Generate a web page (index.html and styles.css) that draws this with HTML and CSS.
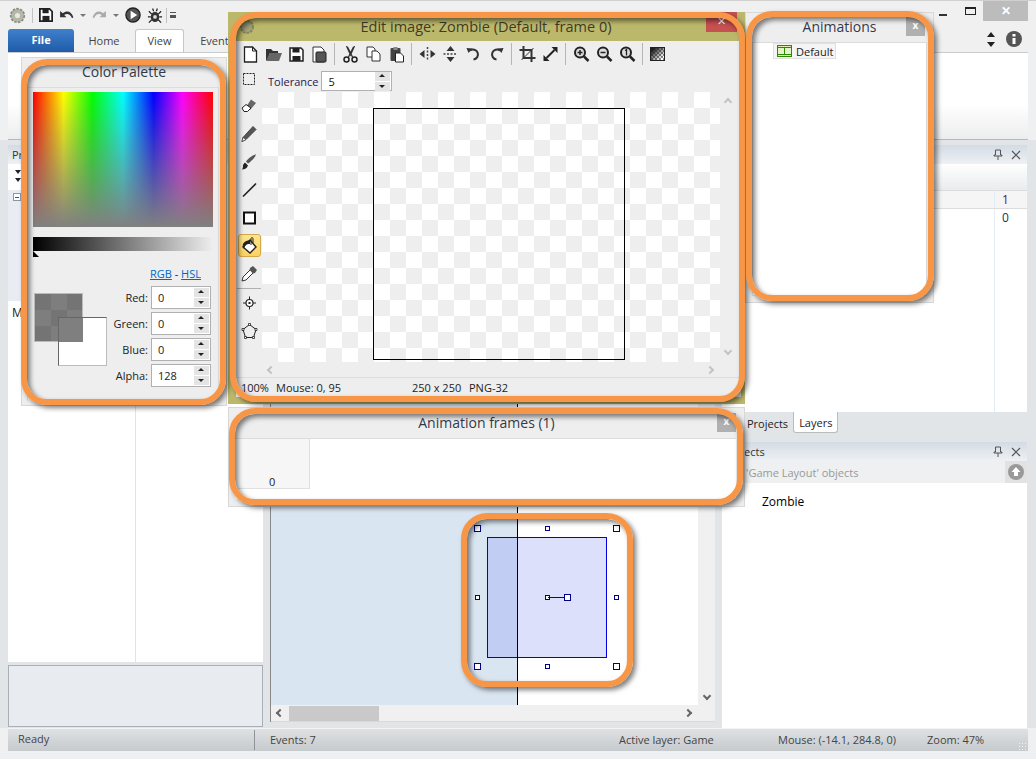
FILE: index.html
```html
<!DOCTYPE html>
<html lang="en">
<head>
    <meta charset="UTF-8">
    <title>Construct 2 - Edit image</title>
    <link rel="stylesheet" href="styles.css">
</head>
<body>
<div class="app">

    <!-- title bar -->
    <div class="titlebar">
        <div class="quick">
            <svg class="qicon" width="17" height="17" viewBox="0 0 20 20"><circle cx="10" cy="10" r="8" fill="#b5b8a8" stroke="#8a8c80" stroke-dasharray="3 1.5" stroke-width="2"/><circle cx="10" cy="10" r="3" fill="#e8e8e0"/></svg>
            <span class="qsep"></span>
            <svg class="qicon" width="14" height="14" viewBox="0 0 16 16"><path d="M1 1h11l3 3v11H1z" fill="#fff" stroke="#222" stroke-width="2"/><rect x="4" y="1" width="7" height="5" fill="#222"/><rect x="4" y="9" width="8" height="6" fill="#222"/></svg>
            <svg class="qicon" width="15" height="11" viewBox="0 0 16 12"><path d="M1 1v7h7L5.500 5.500C8 3.500 12 4 14 9l1.500-1C13.500 1 8 0 4 3.500z" fill="#333"/></svg>
            <span class="qdrop"></span>
            <svg class="qicon" width="15" height="11" viewBox="0 0 16 12"><path d="M15 1v7H8l2.500-2.500C8 3.500 4 4 2 9L.5 8C2.500 1 8 0 12 3.500z" fill="#aaa"/></svg>
            <span class="qdrop"></span>
            <svg class="qicon" width="16" height="16" viewBox="0 0 17 17"><circle cx="8.500" cy="8.500" r="7.500" fill="#555" stroke="#222" stroke-width="1.500"/><path d="M6 4l7 4.500L6 13z" fill="#fff"/></svg>
            <svg class="qicon" width="16" height="17" viewBox="0 0 17 17"><ellipse cx="8.500" cy="10" rx="4.500" ry="5.500" fill="#333"/><circle cx="8.500" cy="10" r="2" fill="#ddd"/><path d="M2 4l3 3M15 4l-3 3M1 10h3M16 10h-3M2 16l3-3M15 16l-3-3M6 1l1 3M11 1l-1 3" stroke="#222" stroke-width="1.300"/></svg>
            <span class="qsep qsep-tight"></span>
            <span class="qmore"></span>
        </div>
        <div class="winbtns">
            <span class="win-min"></span>
            <span class="win-max"></span>
            <span class="win-close">✕</span>
        </div>
    </div>

    <!-- ribbon tabs -->
    <div class="tabs">
        <span class="tab-file">File</span>
        <span class="tab">Home</span>
        <span class="tab tab-on">View</span>
        <span class="tab tab-wide">Events</span>
        <span class="tabs-right">
            <svg width="10" height="15" viewBox="0 0 10 15"><path d="M5 0l4 5H1zM5 15l4-5H1z" fill="#222"/></svg>
            <svg width="16" height="16" viewBox="0 0 16 16"><circle cx="8" cy="8" r="8" fill="#555"/><rect x="6.500" y="7" width="3" height="6" fill="#fff"/><rect x="6.500" y="3" width="3" height="2.500" fill="#fff"/></svg>
        </span>
    </div>
    <div class="ribbon"></div>

    <!-- main docked panels -->
    <div class="main">
        <div class="left">
            <div class="pane pane-left">
                <div class="pane-head">Properties</div>
                <div class="left-body">
                    <div class="left-col">
                        <div class="left-tools"><span class="mini-arrow"></span><span class="mini-arrow"></span></div>
                        <div class="left-tree"><span class="mini-box"></span></div>
                        <div class="left-m">Misc</div>
                    </div>
                    <div class="left-col2"></div>
                </div>
            </div>
            <div class="help-box"></div>
        </div>

        <div class="center">
            <div class="layout-view">
                <div class="canvas-row">
                    <div class="canvas">
                        <div class="outside"></div>
                        <div class="sprite"><div class="sprite-shade"></div></div>
                        <div class="guide"></div>
                        <div class="handle hl1"></div>
                        <div class="handle hl2"></div>
                        <div class="handle hl3"></div>
                        <div class="handle hl4"></div>
                        <div class="handle small hl5"></div>
                        <div class="handle small hl6"></div>
                        <div class="handle small hl7"></div>
                        <div class="handle small hl8"></div>
                        <div class="handle small hl9"></div>
                        <div class="angle-line"></div>
                        <div class="handle hl10"></div>
                    </div>
                    <div class="vscroll"><span class="chev-down"></span></div>
                </div>
                <div class="hscroll">
                    <span class="chev-left"></span>
                    <span class="hthumb"></span>
                    <span class="chev-right"></span>
                </div>
            </div>
        </div>

        <div class="right">
            <div class="pane pane-props">
                <div class="pane-head"><span>Layers</span><span class="pane-btns">
                    <svg width="10" height="11" viewBox="0 0 10 11"><path d="M2.500 1h5v5h1.500v1H1V6h1.500zM5 7v4" fill="none" stroke="#555"/></svg>
                    <svg width="10" height="10" viewBox="0 0 10 10"><path d="M1 1l8 8M9 1l-8 8" stroke="#555" stroke-width="1.200"/></svg>
                </span></div>
                <div class="props-tools"></div>
                <div class="prop-row prop-sel"><span class="prop-val val-1">1</span></div>
                <div class="prop-row"><span class="prop-val val-0">0</span></div>
                <div class="prop-fill"><span class="prop-line"></span></div>
            </div>
            <div class="right-tabs">
                <span class="rtab">Projects</span>
                <span class="rtab rtab-on">Layers</span>
            </div>
            <div class="pane pane-objects">
                <div class="pane-head"><span>Objects</span><span class="pane-btns">
                    <svg width="10" height="11" viewBox="0 0 10 11"><path d="M2.500 1h5v5h1.500v1H1V6h1.500zM5 7v4" fill="none" stroke="#555"/></svg>
                    <svg width="10" height="10" viewBox="0 0 10 10"><path d="M1 1l8 8M9 1l-8 8" stroke="#555" stroke-width="1.200"/></svg>
                </span></div>
                <div class="obj-tools">
                    <span>'Game Layout' objects</span>
                    <span class="obj-up"><svg width="16" height="16" viewBox="0 0 16 16"><circle cx="8" cy="8" r="8" fill="#999"/><path d="M8 3l4.500 5H10v4H6V8H3.500z" fill="#fff"/></svg></span>
                </div>
                <div class="obj-item">Zombie</div>
            </div>
        </div>
    </div>

    <!-- status bar -->
    <div class="status">
        <span class="st st-ready">Ready</span>
        <span class="st st-events">Events: 7</span>
        <span class="st st-layer">Active layer: Game</span>
        <span class="st st-mouse">Mouse: (-14.1, 284.8, 0)</span>
        <span class="st st-zoom">Zoom: 47%</span>
    </div>

    <!-- floating: color palette -->
    <div class="float palette">
        <div class="float-title">Color Palette</div>
        <div class="palette-body">
            <div class="spectrum"><div class="spectrum-fade"></div></div>
            <div class="lum"></div>
            <div class="lum-mark"></div>
            <div class="links"><a href="#">RGB</a> - <a href="#">HSL</a></div>
            <div class="color-row">
                <div class="swatches">
                    <div class="swatch-back"></div>
                    <div class="swatch-front"></div>
                </div>
                <div class="fields">
                    <label class="field"><span>Red:</span><span class="spin"><b>0</b><i class="arrows"><u class="up"></u><u class="dn"></u></i></span></label>
                    <label class="field"><span>Green:</span><span class="spin"><b>0</b><i class="arrows"><u class="up"></u><u class="dn"></u></i></span></label>
                    <label class="field"><span>Blue:</span><span class="spin"><b>0</b><i class="arrows"><u class="up"></u><u class="dn"></u></i></span></label>
                    <label class="field"><span>Alpha:</span><span class="spin"><b>128</b><i class="arrows"><u class="up"></u><u class="dn"></u></i></span></label>
                </div>
            </div>
        </div>
    </div>

    <!-- floating: image editor -->
    <div class="float editor">
        <div class="editor-title">
            <svg class="editor-gear" width="16" height="16" viewBox="0 0 16 16"><circle cx="8" cy="8" r="6" fill="#a3a27a" stroke="#85845f" stroke-width="2" stroke-dasharray="2.500 1"/></svg>
            <span>Edit image: Zombie (Default, frame 0)</span>
            <span class="editor-close">✕</span>
        </div>
        <div class="editor-client">
            <div class="toolbar">
                <svg width="16" height="17" viewBox="0 0 16 17"><path d="M2 1h8l4 4v11H2z" fill="#fff" stroke="#222" stroke-width="1.300"/><path d="M10 1v4h4" fill="none" stroke="#222"/></svg>
                <svg width="17" height="15" viewBox="0 0 17 15"><path d="M1 2h5l2 2h5v2H5L2 13H1z" fill="#333"/><path d="M5 6h12l-3 8H1z" fill="#666"/></svg>
                <svg width="15" height="15" viewBox="0 0 15 15"><path d="M1 1h11l2 2v11H1z" fill="#fff" stroke="#222" stroke-width="1.500"/><rect x="3.500" y="1" width="7" height="4.500" fill="#222"/><rect x="3.500" y="9" width="8" height="5" fill="#222"/></svg>
                <svg width="15" height="17" viewBox="0 0 15 17"><path d="M1 1h8l3 3v12H1z" fill="#fff" stroke="#333"/><rect x="4" y="6" width="10" height="10" rx="1" fill="#555" stroke="#222"/></svg>
                <span class="tsep"></span>
                <svg width="16" height="17" viewBox="0 0 16 17"><path d="M4 0l4 9 4-9M5 1l5 10M11 1L6 11" fill="none" stroke="#333" stroke-width="1.300"/><circle cx="4" cy="13.500" r="2.500" fill="none" stroke="#222" stroke-width="1.500"/><circle cx="12" cy="13.500" r="2.500" fill="none" stroke="#222" stroke-width="1.500"/></svg>
                <svg width="15" height="16" viewBox="0 0 15 16"><path d="M1 1h6l2 2v8H1z" fill="#fff" stroke="#333"/><path d="M6 5h5l3 3v7H6z" fill="#fff" stroke="#333"/></svg>
                <svg width="14" height="17" viewBox="0 0 14 17"><rect x="1" y="2" width="10" height="13" rx="1" fill="#444"/><rect x="4" y="1" width="4" height="3" fill="#888"/><path d="M6 7h5l3 3v6H6z" fill="#fff" stroke="#222"/></svg>
                <span class="tsep"></span>
                <svg width="16" height="14" viewBox="0 0 16 14"><path d="M0 7l5-4v8zM16 7l-5-4v8z" fill="#333"/><path d="M8 0v14" stroke="#444" stroke-dasharray="2 1.500" stroke-width="1.500"/></svg>
                <svg width="14" height="16" viewBox="0 0 14 16"><path d="M7 0l4 5H3zM7 16l4-5H3z" fill="#333"/><path d="M0 8h14" stroke="#444" stroke-dasharray="2 1.500" stroke-width="1.500"/></svg>
                <svg width="14" height="14" viewBox="0 0 14 14"><path d="M3.500 3.500A5 5 0 1 1 7 12.500" fill="none" stroke="#333" stroke-width="2"/><path d="M0 1l6 .5L2 6z" fill="#333"/></svg>
                <svg width="14" height="14" viewBox="0 0 14 14"><path d="M10.500 3.500A5 5 0 1 0 7 12.500" fill="none" stroke="#333" stroke-width="2"/><path d="M14 1l-6 .5L12 6z" fill="#333"/></svg>
                <span class="tsep"></span>
                <svg width="16" height="16" viewBox="0 0 16 16"><path d="M4 0v12h12M0 4h12v12" fill="none" stroke="#333" stroke-width="2"/><path d="M2 14L14 2" stroke="#333"/></svg>
                <svg width="14" height="14" viewBox="0 0 14 14"><path d="M3 11l8-8" stroke="#222" stroke-width="2"/><path d="M8 0h6v6zM0 8v6h6z" fill="#222"/></svg>
                <span class="tsep"></span>
                <svg width="16" height="16" viewBox="0 0 16 16"><circle cx="6.500" cy="6.500" r="5" fill="#ddd" stroke="#222" stroke-width="2"/><path d="M10.500 10.500L15 15" stroke="#222" stroke-width="2.500"/><path d="M4 6.500h5M6.500 4v5" stroke="#222" stroke-width="1.500"/></svg>
                <svg width="16" height="16" viewBox="0 0 16 16"><circle cx="6.500" cy="6.500" r="5" fill="#ddd" stroke="#222" stroke-width="2"/><path d="M10.500 10.500L15 15" stroke="#222" stroke-width="2.500"/><path d="M4 6.500h5" stroke="#222" stroke-width="1.500"/></svg>
                <svg width="16" height="16" viewBox="0 0 16 16"><circle cx="6.500" cy="6.500" r="5" fill="#ddd" stroke="#222" stroke-width="2"/><path d="M10.500 10.500L15 15" stroke="#222" stroke-width="2.500"/><path d="M5.500 4.500l1.500-.8V9.500" fill="none" stroke="#222" stroke-width="1.300"/></svg>
                <span class="tsep"></span>
                <span class="alpha-icon"></span>
            </div>
            <div class="editor-main">
                <div class="tools">
                    <svg class="tool-first" width="12" height="12" viewBox="0 0 12 12"><rect x=".5" y=".5" width="11" height="11" fill="none" stroke="#222" stroke-dasharray="2 1"/></svg>
                    <svg width="16" height="15" viewBox="0 0 16 15"><path d="M10 1l5 3.500-6 7-4-3z" fill="#666"/><path d="M1 9.500L5 6l5 3.500-3.500 3.500H3z" fill="#fff" stroke="#222"/></svg>
                    <svg width="16" height="17" viewBox="0 0 16 17"><path d="M12 1l3 3L5 14l-4 2 1-4z" fill="#555" stroke="#444"/><path d="M2 12l3 2-4 2z" fill="#fff" stroke="#333" stroke-width=".6"/></svg>
                    <svg width="16" height="17" viewBox="0 0 16 17"><path d="M15 1c-1 3-5 7-8 9l-2-2c2-3 7-7 10-7z" fill="#555"/><path d="M4 9l3 3c-1 3-4 4-6 4 1-1 1-3 1-4s1-2 2-3z" fill="#222"/></svg>
                    <svg width="15" height="15" viewBox="0 0 15 15"><path d="M1 14L14 1" stroke="#222" stroke-width="1.600"/></svg>
                    <svg width="13" height="13" viewBox="0 0 13 13"><rect x="1" y="1" width="11" height="11" fill="#fff" stroke="#111" stroke-width="2"/></svg>
                    <span class="tool-on"><svg width="17" height="17" viewBox="0 0 17 17"><path d="M9 3l6 7-6 6-7-6z" fill="#fff" stroke="#222" stroke-width="1.400"/><path d="M2 10C1 7 3 4 9 3v4c-4 0-5 1-6 5z" fill="#222"/><path d="M10 8V2c0-2 2-2 2 0v4" fill="none" stroke="#222"/></svg></span>
                    <svg width="16" height="16" viewBox="0 0 16 16"><path d="M10 3l3 3-8 8-4 1 1-4z" fill="#fff" stroke="#333"/><path d="M9 2l3-2 4 4-2 3-2 .5L8.500 4z" fill="#555"/></svg>
                    <span class="tool-sep"></span>
                    <svg width="13" height="13" viewBox="0 0 13 13"><circle cx="6.500" cy="6.500" r="3.500" fill="#fff" stroke="#222" stroke-width="1.200"/><rect x="5.500" y="5.500" width="2" height="2" fill="#222"/><path d="M6.500 0v3M6.500 10v3M0 6.500h3M10 6.500h3" stroke="#222"/></svg>
                    <svg width="17" height="17" viewBox="0 0 17 17"><path d="M8.500 2l6.500 5-2.500 8h-8L2 7z" fill="none" stroke="#222"/><path d="M7.500 1h2v2h-2zM14 6h2v2h-2zM1 6h2v2H1zM3.500 14h2v2h-2zM11.500 14h2v2h-2z" fill="#fff" stroke="#222" stroke-width=".8"/></svg>
                </div>
                <div class="editor-work">
                    <div class="tolerance">
                        <span>Tolerance</span>
                        <span class="spin spin-tol"><b>5</b><i class="arrows"><u class="up"></u><u class="dn"></u></i></span>
                    </div>
                    <div class="board-row">
                        <div class="board"><div class="image-box"></div></div>
                        <div class="board-vs"><span class="soft-up"></span><span class="soft-down"></span></div>
                    </div>
                    <div class="board-hs"><span class="soft-left"></span><span class="soft-right"></span></div>
                </div>
            </div>
            <div class="editor-status">
                <span class="es-zoom">100%</span>
                <span class="es-mouse">Mouse: 0, 95</span>
                <span class="es-size">250 x 250</span>
                <span class="es-fmt">PNG-32</span>
            </div>
        </div>
    </div>

    <!-- floating: animations -->
    <div class="float anims">
        <div class="float-title">Animations<span class="float-x">x</span></div>
        <div class="anims-body">
            <div class="anim-item">
                <svg width="15" height="12" viewBox="0 0 15 12"><rect x=".5" y=".5" width="14" height="11" fill="#e3f3c8" stroke="#2d8a00"/><path d="M.5 2.500h14M.5 9.500h14M7.500 2.500v7" stroke="#2d8a00"/><path d="M1 1.500h13M1 10.500h13" stroke="#d6e9a8" stroke-dasharray="1 1"/></svg>
                <span>Default</span>
            </div>
        </div>
    </div>

    <!-- floating: frames -->
    <div class="float frames">
        <div class="float-title">Animation frames (1)<span class="float-x">x</span></div>
        <div class="frames-body">
            <div class="frame-thumb">0</div>
        </div>
    </div>

    <!-- orange callouts -->
    <div class="callout co-palette"></div>
    <div class="callout co-editor"></div>
    <div class="callout co-anims"></div>
    <div class="callout co-frames"></div>
    <div class="callout co-sprite"></div>
</div>
</body>
</html>
```

FILE: styles.css
```css
* {
    box-sizing: border-box;
}
html, body {
    margin: 0;
    padding: 0;
}
body {
    font-family: "Open Sans", "Noto Sans", sans-serif;
    font-size: 11px;
    color: #222;
    background: #e6e8ea;
}
.app {
    position: relative;
    width: 1036px;
    height: 759px;
    overflow: hidden;
    background: #eef0f1;
    display: flex;
    flex-direction: column;
}

/* title bar */
.titlebar {
    height: 28px;
    flex: none;
    display: flex;
    justify-content: space-between;
    background: #f0f0f0;
    border-top: 1px solid #d0d0d0;
}
.quick {
    display: flex;
    align-items: center;
    gap: 6px;
    padding: 1px 0 0 9px;
}
.qsep {
    width: 1px;
    height: 15px;
    background: #c2c2c2;
}
.qsep-tight,
.qmore {
    margin-left: -3px;
}
.qicon {
    display: block;
}
.qdrop {
    width: 0;
    height: 0;
    border: 3px solid transparent;
    border-top: 3px solid #777;
    margin-top: 3px;
}
.qmore {
    width: 6px;
    height: 6px;
    border-top: 1px solid #555;
    border-bottom: 3px solid #555;
}
.winbtns {
    display: flex;
    align-items: flex-start;
}
.win-min {
    width: 8px;
    height: 2px;
    background: #333;
    margin: 13px 18px 0 0;
}
.win-max {
    width: 11px;
    height: 8px;
    border: 1px solid #222;
    border-top-width: 2px;
    margin: 6px 7px 0 0;
}
.win-close {
    width: 45px;
    height: 20px;
    margin-right: 8px;
    background: #bcbcbc;
    color: #fff;
    font-size: 12px;
    font-weight: 700;
    text-align: center;
    line-height: 20px;
}

/* ribbon */
.tabs {
    height: 24px;
    flex: none;
    padding: 0 8px;
    display: flex;
    align-items: flex-end;
    background: #f0f0f0;
    font-size: 11px;
}
.tab-file {
    width: 66px;
    height: 23px;
    background: linear-gradient(#3f80cc, #1f5ba8);
    border-radius: 3px 3px 0 0;
    color: #fff;
    font-weight: 700;
    text-align: center;
    line-height: 21px;
}
.tab {
    width: 60px;
    height: 22px;
    text-align: center;
    line-height: 21px;
    color: #444;
}
.tab-on {
    width: 49px;
    height: 23px;
    margin-left: 1px;
    background: #fff;
    border: 1px solid #c4c6c8;
    border-bottom: 0;
    border-radius: 3px 3px 0 0;
}
.tab-wide {
    width: 66px;
}
.tabs-right {
    margin-left: auto;
    display: flex;
    align-items: center;
    gap: 10px;
    padding: 0 6px 5px 0;
}
.ribbon {
    height: 88px;
    flex: none;
    margin: 0 8px;
    background: linear-gradient(#fff 60%, #eceded);
    border-top: 1px solid #c9cbcd;
    border-bottom: 1px solid #b5b9bd;
}

/* docked panels */
.main {
    height: 588px;
    flex: none;
    padding: 5px 8px 0;
    display: flex;
    gap: 7px;
    background: #e2e5e8;
}
.left {
    width: 255px;
    flex: none;
    display: flex;
    flex-direction: column;
    gap: 3px;
    padding-bottom: 1px;
}
.pane-head {
    height: 19px;
    flex: none;
    display: flex;
    justify-content: space-between;
    align-items: center;
    padding: 0 6px 0 4px;
    background: linear-gradient(#d3dbe4, #eef1f4);
    color: #333;
}
.pane-btns {
    display: flex;
    align-items: center;
    gap: 8px;
}
.pane-left {
    flex: 1;
    display: flex;
    flex-direction: column;
    background: #fff;
}
.left-body {
    flex: 1;
    display: flex;
}
.left-col {
    width: 128px;
    border-right: 1px solid #e3e3e3;
}
.left-tools {
    height: 26px;
    padding: 6px 0 0 7px;
}
.mini-arrow {
    display: block;
    width: 0;
    height: 0;
    margin-bottom: 4px;
    border: 3px solid transparent;
    border-top: 4px solid #222;
    border-bottom: 0;
}
.left-tree {
    height: 111px;
    padding: 3px 0 0 5px;
    background: #e9edf3;
}
.mini-box {
    display: block;
    width: 8px;
    height: 8px;
    background: linear-gradient(#456, #456) center / 4px 1px no-repeat, #fff;
    border: 1px solid #8a97a8;
}
.left-m {
    padding: 3px 0 0 4px;
    font-size: 12px;
}
.help-box {
    height: 62px;
    flex: none;
    background: #e8ebf0;
    border: 1px solid #a9b0b8;
}
.center {
    width: 445px;
    flex: none;
    padding-bottom: 6px;
}
.layout-view {
    height: 100%;
    display: flex;
    flex-direction: column;
    border-left: 1px solid #888;
    background: #f0f0f0;
}
.canvas-row {
    flex: 1;
    display: flex;
}
.canvas {
    position: relative;
    flex: 1;
    background: #fff;
}
.outside {
    position: absolute;
    left: 0;
    top: 0;
    bottom: 0;
    width: 246px;
    background: #d9e5f1;
}
.guide {
    position: absolute;
    left: 246px;
    top: 0;
    bottom: 0;
    width: 1px;
    background: #000;
}
.sprite {
    position: absolute;
    left: 216px;
    top: 392px;
    width: 120px;
    height: 121px;
    background: #dde0fb;
    border: 1px solid #0000e0;
}
.sprite-shade {
    width: 29px;
    height: 100%;
    background: #c2cdf3;
}
.handle {
    position: absolute;
    width: 7px;
    height: 7px;
    background: #fff;
    border: 1px solid #00008b;
}
.handle.small {
    width: 5px;
    height: 5px;
}
.hl1 { left: 203px; top: 380px; }
.hl2 { left: 342px; top: 380px; }
.hl3 { left: 203px; top: 518px; }
.hl4 { left: 342px; top: 518px; }
.hl5 { left: 274px; top: 381px; }
.hl6 { left: 204px; top: 450px; }
.hl7 { left: 343px; top: 450px; }
.hl8 { left: 274px; top: 519px; }
.hl9 { left: 274px; top: 450px; }
.hl10 { left: 293px; top: 449px; }
.angle-line {
    position: absolute;
    left: 277px;
    top: 452px;
    width: 17px;
    height: 1px;
    background: #0000c8;
}
.vscroll {
    width: 17px;
    display: flex;
    align-items: flex-end;
    justify-content: center;
    padding-bottom: 6px;
    background: #f0f0f0;
}
.chev-down, .chev-left, .chev-right {
    width: 6px;
    height: 6px;
    border: solid #666;
    border-width: 0 2px 2px 0;
    display: block;
}
.chev-down {
    transform: rotate(45deg);
}
.chev-left {
    transform: rotate(135deg);
    margin-left: 6px;
}
.chev-right {
    transform: rotate(-45deg);
    margin-left: auto;
    margin-right: 24px;
}
.hscroll {
    height: 17px;
    flex: none;
    display: flex;
    align-items: center;
    border-bottom: 1px solid #d9d9d9;
}
.hthumb {
    width: 90px;
    height: 15px;
    margin-left: 6px;
    background: #c9c9c9;
}
.right {
    width: 305px;
    flex: none;
    display: flex;
    flex-direction: column;
}
.pane-props {
    height: 267px;
    flex: none;
    display: flex;
    flex-direction: column;
    background: #fff;
}
.props-tools {
    height: 26px;
    flex: none;
    background: linear-gradient(#fff, #e9ebed);
}
.prop-row {
    height: 19px;
    flex: none;
    display: flex;
    justify-content: flex-end;
    padding-right: 3px;
    background: #fff;
}
.prop-sel {
    background: #f5f5f5;
    border-top: 1px solid #dcdcdc;
    border-bottom: 1px solid #dcdcdc;
}
.prop-val {
    width: 30px;
    font-size: 12px;
    padding-left: 7px;
    border-left: 1px solid #e4ecf5;
}
.val-1 {
    color: #5e1050;
}
.val-0 {
    color: #1a2f5f;
}
.prop-fill {
    flex: 1;
    display: flex;
    justify-content: flex-end;
    padding-right: 3px;
}
.prop-line {
    width: 30px;
    border-left: 1px solid #e4ecf5;
}
.right-tabs {
    height: 24px;
    flex: none;
    display: flex;
    align-items: flex-start;
    padding-left: 20px;
}
.rtab {
    height: 21px;
    padding: 0 5px;
    line-height: 23px;
}
.rtab-on {
    background: #fff;
    border: 1px solid #b9bcbf;
    border-top: 0;
    border-radius: 0 0 3px 3px;
    line-height: 22px;
}
.pane-objects {
    flex: 1;
    display: flex;
    flex-direction: column;
    background: #fff;
    margin-top: 6px;
}
.obj-tools {
    height: 22px;
    flex: none;
    display: flex;
    justify-content: space-between;
    align-items: center;
    padding-left: 24px;
    background: #eef0f1;
    color: #999;
}
.obj-up {
    width: 22px;
    height: 22px;
    display: flex;
    align-items: center;
    justify-content: center;
    background: #e2e2e2;
}
.obj-item {
    padding: 10px 0 0 40px;
    font-size: 12px;
    color: #000;
}

/* status bar */
.status {
    position: relative;
    height: 23px;
    flex: none;
    margin: 0 8px;
    background: linear-gradient(#dfe1e3, #c6cacd);
    border-top: 1px solid #f2f3f4;
    color: #444;
    display: flex;
    align-items: center;
}
.status::after {
    content: "";
    position: absolute;
    right: 0;
    bottom: 0;
    width: 10px;
    height: 9px;
    background: radial-gradient(circle, #f4f4f4 1px, transparent 1px) 0 0 / 3px 3px;
}
.st {
    flex: none;
}
.st-ready { width: 247px; padding-left: 10px; border-right: 1px solid #8f9396; height: 20px; line-height: 18px; }
.st-events { width: 364px; padding-left: 15px; padding-bottom: 1px; }
.st-layer { width: 159px; padding-bottom: 1px; }
.st-mouse { width: 149px; padding-bottom: 1px; }
.st-zoom { padding-bottom: 1px; }

/* floating windows */
.float {
    position: absolute;
    background: #eee;
}
.float-title {
    position: relative;
    height: 29px;
    flex: none;
    font-size: 14px;
    color: #333a4a;
    text-align: center;
    line-height: 28px;
}
.float-x {
    position: absolute;
    right: 8px;
    top: 4px;
    width: 19px;
    height: 19px;
    background: #b0b0b0;
    color: #fff;
    font-size: 10px;
    font-weight: 700;
    line-height: 16px;
}

/* palette */
.palette {
    left: 21px;
    top: 57px;
    width: 206px;
    height: 349px;
    border: 1px solid #d8d8d8;
    display: flex;
    flex-direction: column;
}
.palette-body {
    flex: 1;
    margin: 0 7px 4px 5px;
    padding: 4px 5px 0;
    border: 1px solid #dcdcdc;
    border-bottom-width: 0;
}
.spectrum {
    position: relative;
    height: 135px;
    background: linear-gradient(to right, #f00, #ff0 17%, #0f0 33%, #0ff 50%, #00f 67%, #f0f 83%, #f00);
}
.spectrum-fade {
    height: 100%;
    background: linear-gradient(rgba(128, 128, 128, 0), #808080);
}
.lum {
    height: 14px;
    margin-top: 10px;
    background: linear-gradient(to right, #000, #eee);
}
.lum-mark {
    width: 0;
    height: 0;
    border-left: 6px solid #000;
    border-top: 6px solid transparent;
}
.links {
    margin-top: 9px;
    padding-right: 12px;
    text-align: right;
}
.links a {
    color: #0066cc;
}
.color-row {
    display: flex;
    justify-content: space-between;
    margin-top: 5px;
}
.swatches {
    position: relative;
    width: 74px;
    height: 74px;
    margin: 7px 0 0 1px;
}
.swatch-back {
    width: 49px;
    height: 49px;
    border: 1px solid #bbb;
    background: conic-gradient(#7e7e7e 25%, #747474 0 50%, #7e7e7e 0 75%, #747474 0) 0 0 / 32px 32px;
}
.swatch-front {
    position: absolute;
    left: 24px;
    top: 24px;
    width: 49px;
    height: 49px;
    border: 1px solid #bbb;
    border-top-color: #666;
    border-left-color: #666;
    background: linear-gradient(#7f7f7f, #7f7f7f) 0 0 / 24px 24px no-repeat, #fff;
}
.fields {
    display: flex;
    flex-direction: column;
    gap: 3px;
    margin-right: 2px;
}
.field {
    display: flex;
    align-items: center;
    justify-content: flex-end;
    gap: 3px;
}
.spin {
    width: 60px;
    height: 23px;
    display: flex;
    justify-content: space-between;
    align-items: center;
    padding: 0 1px 0 6px;
    background: #fff;
    border: 1px solid #b0b0b0;
}
.spin b {
    font-weight: 400;
}
.arrows {
    width: 15px;
    display: flex;
    flex-direction: column;
    gap: 1px;
}
.arrows u {
    height: 9px;
    background: #e4e4e4;
    position: relative;
    display: block;
}
.arrows u::after {
    content: "";
    position: absolute;
    left: 4px;
    border: 3px solid transparent;
}
.arrows .up::after {
    top: -1px;
    border-bottom: 3px solid #222;
}
.arrows .dn::after {
    top: 3px;
    border-top: 3px solid #222;
}

/* editor */
.editor {
    left: 228px;
    top: 12px;
    width: 517px;
    height: 392px;
    background: #bcb86b;
    padding: 0 4px 7px 8px;
    display: flex;
    flex-direction: column;
}
.editor-title {
    height: 29px;
    flex: none;
    position: relative;
    font-size: 14.5px;
    line-height: 29px;
    text-align: center;
    color: #3c3c28;
    padding-right: 5px;
}
.editor-gear {
    position: absolute;
    left: 3px;
    top: 7px;
}
.editor-close {
    position: absolute;
    right: 4px;
    top: 0;
    width: 31px;
    height: 20px;
    background: #c75050;
    color: #fff;
    font-size: 11px;
    line-height: 18px;
}
.editor-client {
    flex: 1;
    background: #eee;
    display: flex;
    flex-direction: column;
}
.toolbar {
    height: 26px;
    flex: none;
    display: flex;
    align-items: center;
    padding-left: 3px;
}
.toolbar svg {
    flex: none;
    width: 23px;
}
.tsep {
    width: 1px;
    height: 22px;
    flex: none;
    background: #b5b5b5;
    margin: 0 4px 0 3px;
}
.alpha-icon {
    width: 15px;
    height: 14px;
    margin-left: 3px;
    border: 1px solid #222;
    background: linear-gradient(135deg, #222 15%, transparent 85%), conic-gradient(#888 25%, #fff 0 50%, #888 0 75%, #fff 0) 0 0 / 4px 4px;
}
.editor-main {
    flex: 1;
    display: flex;
}
.tools {
    width: 26px;
    flex: none;
    display: flex;
    flex-direction: column;
    align-items: center;
    margin-top: -2px;
}
.tools > svg {
    height: 28px;
    flex: none;
}
.tools .tool-first {
    margin-bottom: -1px;
}
.tool-on {
    width: 23px;
    height: 23px;
    margin: 2px 0 3px;
    display: flex;
    align-items: center;
    justify-content: center;
    background: linear-gradient(#fde58e, #fbd25f);
    border: 1px solid #d6a84a;
    border-radius: 3px;
}
.tool-sep {
    width: 24px;
    height: 1px;
    flex: none;
    background: #b0b0b0;
}
.editor-work {
    flex: 1;
    display: flex;
    flex-direction: column;
    min-width: 0;
}
.tolerance {
    height: 25px;
    flex: none;
    display: flex;
    align-items: center;
    gap: 3px;
    padding: 3px 0 0 6px;
    color: #1c2050;
}
.spin-tol {
    width: 71px;
    height: 20px;
    color: #111;
}
.board-row {
    height: 270px;
    flex: none;
    display: flex;
}
.board {
    position: relative;
    flex: 1;
    background-color: #fff;
    background-image: conic-gradient(#eee 25%, #fff 0 50%, #eee 0 75%, #fff 0);
    background-size: 32px 32px;
    background-position: 16px 0;
}
.image-box {
    position: absolute;
    left: 111px;
    top: 16px;
    width: 252px;
    height: 252px;
    border: 1px solid #000;
}
.board-vs {
    width: 21px;
    flex: none;
    display: flex;
    flex-direction: column;
    justify-content: space-between;
    align-items: center;
    padding: 7px 6px 8px 0;
}
.soft-up, .soft-down, .soft-left, .soft-right {
    width: 6px;
    height: 6px;
    border: solid #c4c4c4;
    border-width: 2px 0 0 2px;
    display: block;
}
.soft-up { transform: rotate(45deg); }
.soft-down { transform: rotate(225deg); }
.soft-left { transform: rotate(-45deg); }
.soft-right { transform: rotate(135deg); }
.board-hs {
    height: 15px;
    flex: none;
    display: flex;
    justify-content: space-between;
    align-items: center;
    padding: 0 28px 0 6px;
}
.editor-status {
    height: 20px;
    flex: none;
    display: flex;
    align-items: center;
    border-top: 1px solid #dcdcdc;
    padding-left: 5px;
}
.es-zoom { width: 35px; }
.es-mouse { width: 136px; }
.es-size { width: 57px; }

/* animations */
.anims {
    left: 745px;
    top: 12px;
    width: 189px;
    height: 291px;
    border: 1px solid #d8d8d8;
    display: flex;
    flex-direction: column;
}
.anims-body {
    flex: 1;
    margin: 0 6px 6px;
    padding: 0 0 0 20px;
    background: #fff;
    border: 1px solid #dcdcdc;
}
.anim-item {
    display: flex;
    width: fit-content;
    align-items: center;
    gap: 4px;
    height: 16px;
    padding: 0 2px 0 3px;
    background: #f5f5f5;
    border: 1px solid #e0e0e0;
}

/* frames */
.frames {
    left: 228px;
    top: 407px;
    width: 517px;
    height: 100px;
    border: 1px solid #d8d8d8;
    display: flex;
    flex-direction: column;
}
.frames .float-title {
    height: 30px;
    line-height: 30px;
}
.frames .float-x {
    top: 5px;
}
.frames-body {
    flex: 1;
    margin: 0 8px 7px 6px;
    background: #fff;
    border-top: 1px solid #dcdcdc;
}
.frame-thumb {
    width: 75px;
    height: 50px;
    padding: 35px 0 0 34px;
    background: #f6f6f6;
    border: 1px solid #e0e0e0;
    border-width: 0 1px 1px 0;
}

/* orange callouts */
.callout {
    position: absolute;
    border: 6px solid #f79646;
    border-radius: 26px;
    box-shadow: 3px 3px 5px rgba(0, 0, 0, 0.5), inset 3px 3px 5px rgba(0, 0, 0, 0.5);
}
.co-palette { left: 21px; top: 59px; width: 205px; height: 346px; }
.co-editor { left: 230px; top: 12px; width: 515px; height: 390px; }
.co-anims { left: 746px; top: 11px; width: 188px; height: 290px; }
.co-frames { left: 229px; top: 408px; width: 514px; height: 97px; }
.co-sprite { left: 461px; top: 513px; width: 172px; height: 174px; }
```
